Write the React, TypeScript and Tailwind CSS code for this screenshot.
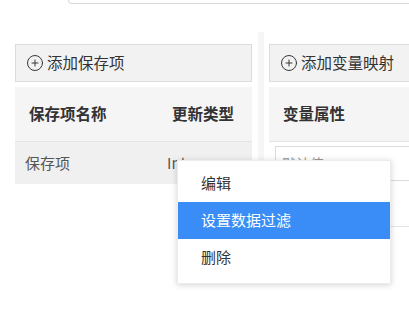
import { CirclePlus } from "lucide-react";

const font = { fontFamily: '"Noto Sans CJK SC", "Noto Sans", sans-serif' };

// toolbar button strip at top of each panel
const AddBar = ({ label }: { label: string }) => (
  <div className="h-[38px] border border-[#dcdcdc] bg-[#f2f2f2] flex items-center gap-[3px] pl-[10px] text-[15.5px] text-[#333]">
    <CirclePlus size={18} strokeWidth={1.3} className="text-[#333]" />
    <span>{label}</span>
  </div>
);

const menuItems = ["编辑", "设置数据过滤", "删除"];

export default function App() {
  return (
    <div className="relative w-[409px] h-[318px] overflow-hidden bg-white" style={font}>
      {/* search box edge peeking at top */}
      <div className="ml-[68px] w-[360px] h-[4px] border-x border-b border-[#dadada] rounded-b-[6px]" />

      <div className="flex pt-[28px]">
        {/* left panel */}
        <div className="ml-[15px] w-[237px] shrink-0 pt-[12px]">
          <AddBar label="添加保存项" />
          <div className="mt-[5px] h-[55px] bg-[#f5f5f5] border-b border-[#e4e4e4] flex items-center text-[15.5px] font-bold text-[#333]">
            <div className="w-[143px] pl-[14px]">保存项名称</div>
            <div className="pl-[14px]">更新类型</div>
          </div>
          <div className="h-[42px] bg-[#f0f0f0] flex items-center text-[15px] text-[#555]">
            <div className="w-[143px] pl-[10px]">保存项</div>
            <div className="pl-[9px]">Integer</div>
          </div>
        </div>

        {/* divider */}
        <div className="ml-[6px] w-[6px] shrink-0 h-[165px] bg-[#f6f6f6]" />

        {/* right panel */}
        <div className="ml-[5px] w-[160px] shrink-0 pt-[12px]">
          <AddBar label="添加变量映射" />
          <div className="mt-[5px] h-[55px] bg-[#f5f5f5] border-b border-[#e4e4e4] flex items-center pl-[14px] text-[15.5px] font-bold text-[#333]">
            变量属性
          </div>
          <div className="ml-[6px] mt-[4px] h-[35px] border border-[#dcdcdc] bg-white flex items-center pl-[6px] text-[14px] text-[#999]">
            默认值
          </div>
          <div className="mt-[45px] h-px bg-[#e4e4e4]" />
        </div>
      </div>

      {/* context menu */}
      <div className="absolute left-[177px] top-[160px] w-[214px] bg-white pt-[4px] pb-[7px] shadow-[0_1px_6px_rgba(0,0,0,0.18)] border border-[#ececec]">
        {menuItems.map((m, i) => (
          <div
            key={m}
            className={`h-[37px] flex items-center pl-[23px] text-[15px] ${i === 1 ? "bg-[#3a8cf6] text-white" : "text-[#333]"}`}
          >
            {m}
          </div>
        ))}
      </div>
    </div>
  );
}
